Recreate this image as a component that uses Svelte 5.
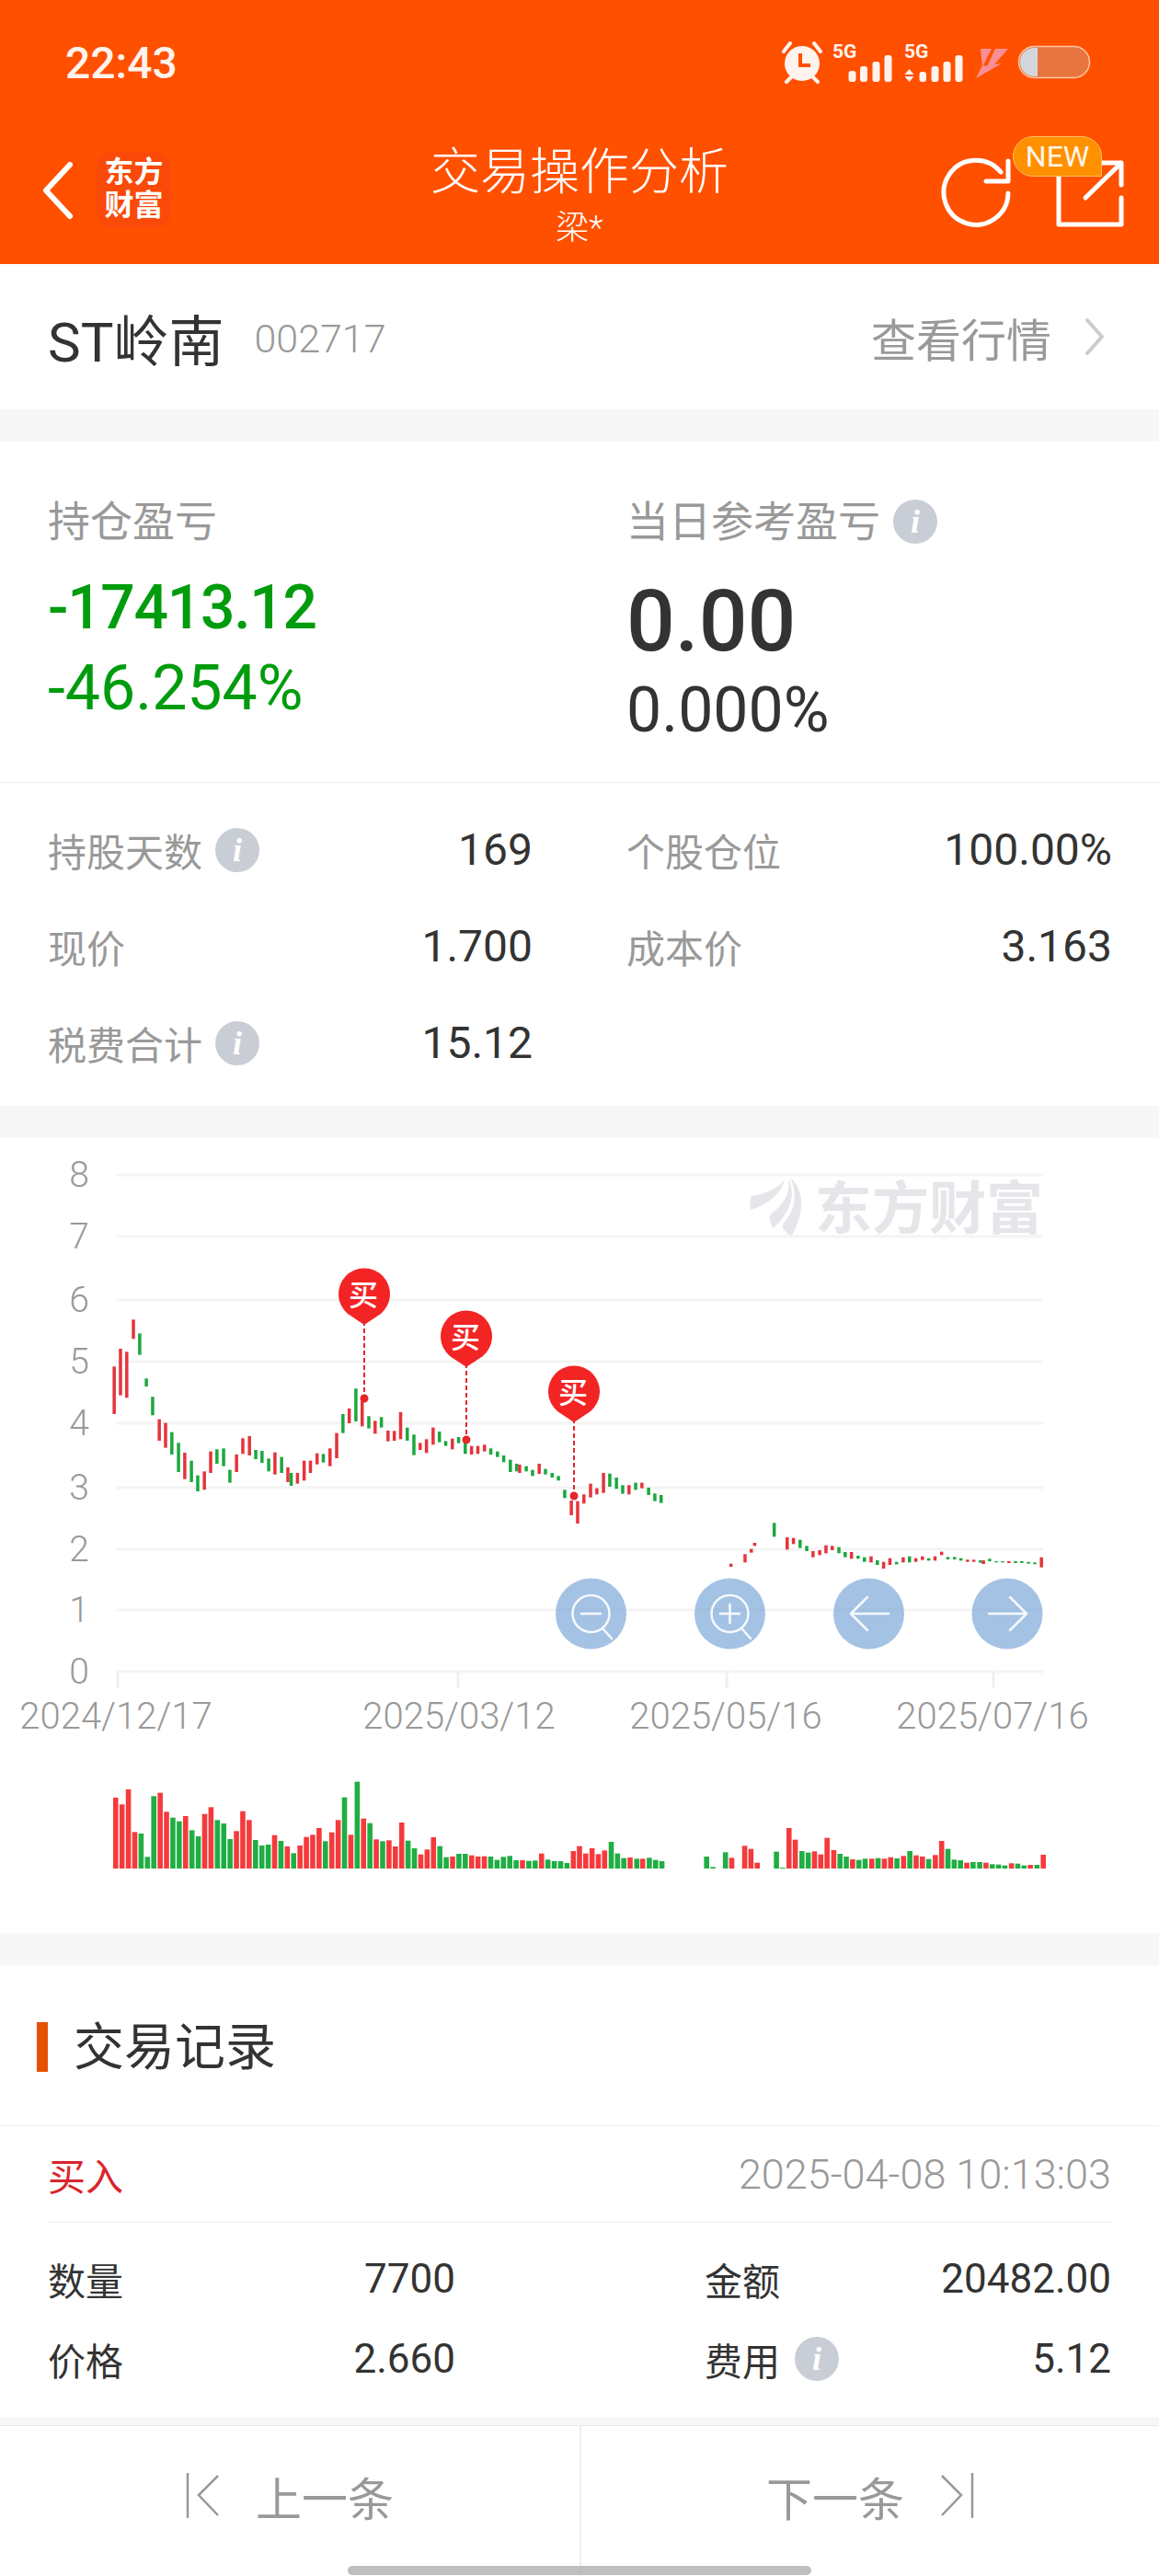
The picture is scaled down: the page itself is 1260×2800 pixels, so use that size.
<script>
  // chart samples: x and y are in crop units, sx/sy bring them to page pixels
  const sx = (x) => x / 2.489;
  const sy = (y) => 1220 + y / 3;

  const candles = [
    [309,793,948,'r'],[326,735,887,'r'],[343,745,895,'r'],[361,640,703,'r'],[378,685,755,'g'],[396,832,858,'g'],
    [413,892,952,'g'],[431,965,1035,'r'],[448,977,1058,'r'],[465,1007,1080,'g'],[483,1042,1137,'g'],[500,1074,1160,'r'],
    [518,1100,1170,'g'],[535,1148,1200,'g'],[553,1135,1195,'r'],[570,1070,1140,'r'],[587,1063,1110,'g'],[605,1060,1118,'g'],
    [622,1130,1172,'g'],[640,1080,1137,'r'],[657,1027,1078,'r'],[675,1020,1083,'r'],[692,1065,1095,'g'],[709,1068,1107,'g'],
    [727,1093,1135,'g'],[744,1073,1145,'r'],[762,1088,1140,'g'],[779,1122,1170,'r'],[788,1140,1182,'g'],[805,1140,1175,'r'],
    [823,1100,1165,'r'],[840,1100,1140,'r'],[858,1076,1112,'r'],[875,1078,1106,'g'],[893,1060,1118,'r'],[911,1010,1092,'r'],
    [928,948,1010,'g'],[945,930,978,'r'],[963,865,972,'g'],[980,905,988,'r'],[998,955,995,'g'],[1015,970,1012,'r'],
    [1032,958,992,'g'],[1050,1002,1037,'r'],[1067,1003,1035,'r'],[1084,942,1030,'r'],[1102,992,1035,'g'],[1120,1015,1082,'g'],
    [1137,1042,1065,'r'],[1154,1030,1075,'r'],[1172,992,1048,'r'],[1189,1005,1040,'g'],[1206,1036,1052,'g'],[1224,1028,1063,'r'],
    [1241,1023,1043,'g'],[1259,1040,1078,'g'],[1276,1052,1080,'r'],[1293,1052,1078,'r'],[1311,1048,1070,'r'],[1328,1060,1080,'g'],
    [1346,1070,1088,'g'],[1363,1083,1105,'g'],[1381,1097,1137,'g'],[1398,1110,1135,'g'],[1406,1113,1140,'r'],[1424,1118,1135,'g'],
    [1441,1130,1150,'g'],[1459,1110,1143,'r'],[1476,1127,1145,'g'],[1494,1140,1155,'g'],[1511,1150,1165,'g'],[1528,1195,1222,'g'],
    [1546,1230,1278,'r'],[1563,1232,1305,'r'],
    [1580,1210,1240,'r'],[1598,1175,1220,'r'],[1615,1190,1210,'r'],[1633,1140,1205,'r'],[1650,1142,1185,'g'],[1668,1155,1192,'g'],
    [1685,1180,1208,'g'],[1702,1180,1210,'r'],[1720,1172,1195,'g'],[1737,1172,1190,'r'],[1755,1188,1212,'g'],[1772,1207,1232,'g'],
    [1789,1212,1238,'g'],
    [1978,1436,1446,'r'],[2016,1405,1432,'r'],[2033,1388,1400,'r'],[2042,1368,1378,'r'],[2095,1303,1348,'g'],[2130,1350,1390,'r'],
    [2147,1352,1372,'r'],[2165,1358,1385,'g'],[2183,1378,1395,'g'],[2200,1395,1415,'r'],[2218,1392,1408,'r'],[2235,1376,1402,'r'],
    [2252,1378,1392,'r'],[2270,1382,1402,'g'],[2287,1398,1415,'g'],[2304,1398,1420,'r'],[2322,1410,1420,'g'],[2339,1415,1430,'g'],
    [2357,1412,1432,'r'],[2374,1425,1440,'g'],[2391,1430,1452,'r'],[2408,1418,1440,'r'],[2426,1430,1438,'g'],[2444,1415,1432,'r'],
    [2461,1412,1432,'g'],[2478,1418,1430,'r'],[2496,1412,1424,'r'],[2513,1418,1426,'g'],[2530,1412,1426,'r'],[2548,1397,1408,'r'],
    [2565,1414,1422,'g'],[2583,1414,1422,'g'],[2600,1418,1426,'g'],[2618,1423,1430,'r'],[2635,1423,1430,'r'],[2653,1425,1433,'g'],
    [2661,1425,1437,'r'],[2678,1420,1428,'g'],[2696,1428,1432,'g'],[2713,1428,1432,'g'],[2730,1428,1434,'r'],[2748,1428,1434,'g'],
    [2765,1428,1434,'g'],[2783,1430,1436,'g'],[2800,1432,1438,'g'],[2818,1415,1448,'r']
  ];

  const volTops = [
    759,781,732,871,876,952,754,743,805,824,836,819,865,885,812,790,832,843,894,868,803,832,897,915,912,881,900,918,940,915,
    887,880,858,901,872,832,758,880,707,827,842,895,901,898,918,840,899,924,944,928,888,917,953,951,942,942,947,951,950,951,
    962,952,949,963,963,965,964,941,961,966,966,972,933
  ];
  const volColors = 'rrrrgggrrggrggrrgggrrrgggrgrgrrrrgrrgrgrgrgrrrggrrrggrggrrrgggggrggrggggr';
  const volumes = [
    ...volTops.map((top, i) => [313 + 17.2 * i, top, volColors[i]]),
    [1568,917,'r'],[1585,941,'r'],[1602,924,'r'],[1619,943,'r'],[1636,931,'r'],[1654,903,'g'],[1671,941,'g'],[1688,956,'g'],
    [1705,954,'r'],[1723,958,'g'],[1739,958,'r'],[1757,955,'g'],[1774,962,'g'],[1791,966,'g'],
    [1912,951,'g'],[1929,985,'g'],[1963,937,'g'],[1980,955,'r'],[2015,916,'r'],[2032,926,'r'],[2049,971,'r'],
    [2101,935,'g'],[2118,987,'g'],[2135,858,'r'],[2152,896,'r'],[2170,933,'g'],[2187,938,'g'],[2204,934,'r'],[2221,944,'r'],
    [2238,890,'r'],[2256,930,'r'],[2273,942,'g'],[2290,951,'g'],[2307,960,'r'],[2324,962,'g'],[2341,958,'g'],[2359,958,'r'],
    [2376,956,'g'],[2393,958,'r'],[2410,953,'r'],[2427,957,'g'],[2445,949,'r'],[2462,933,'g'],[2479,947,'r'],[2496,951,'r'],
    [2513,959,'g'],[2531,946,'r'],[2548,900,'r'],[2565,926,'g'],[2582,961,'g'],[2599,963,'g'],[2616,971,'r'],[2633,969,'g'],
    [2651,969,'g'],[2668,971,'r'],[2685,976,'g'],[2702,977,'g'],[2719,980,'g'],[2737,973,'r'],[2754,974,'g'],[2771,980,'g'],
    [2788,978,'r'],[2806,978,'g'],[2823,945,'r']
  ];

  const gridYs = [1276, 1343, 1412, 1479, 1546, 1616, 1683, 1749, 1816];
  const ticks = [
    { x: 128, label: 126, text: '2024/12/17' },
    { x: 498, label: 499, text: '2025/03/12' },
    { x: 790, label: 789, text: '2025/05/16' },
    { x: 1080, label: 1079, text: '2025/07/16' }
  ];
  const pins = [
    { x: 395, y: 1407, dot: 1519 },
    { x: 506, y: 1453, dot: 1564 },
    { x: 623, y: 1513, dot: 1625 }
  ];
</script>

<div class="page">
  <header class="top">
    <div class="status">
      <span class="time">22:43</span>
      <svg class="status-icons" viewBox="850 40 340 55" width="340" height="55">
        <g fill="#fff3ee">
          <circle cx="872" cy="69" r="19" />
          <path d="M852 56l7-9 M892 56l-7-9 M860 84l-5 5 M884 84l5 5" stroke="#fff3ee" stroke-width="4" stroke-linecap="round" fill="none" />
          <path d="M870 58v13h11" stroke="#ff5000" stroke-width="4" fill="none" />
          <text x="905" y="63" class="fiveg">5G</text>
          <text x="983" y="63" class="fiveg">5G</text>
          <rect x="922.5" y="77" width="8" height="12" rx="3" />
          <rect x="935" y="72" width="8" height="17" rx="3" />
          <rect x="948.5" y="67" width="8" height="22" rx="3" />
          <rect x="961.5" y="60" width="8" height="29" rx="3" />
          <path d="M988.5 75l5 6h-10z M988.5 89l5-6h-10z" />
          <rect x="999.5" y="78" width="7.5" height="11" rx="3" />
          <rect x="1012.5" y="72" width="8" height="17" rx="3" />
          <rect x="1025.5" y="67" width="8" height="22" rx="3" />
          <rect x="1038.5" y="60" width="8" height="29" rx="3" />
        </g>
        <path d="M1066 53h12l-10 20z M1082 53h14l-15 17 8-1-28 16 7-14 5 1z" fill="#f98f95" />
        <rect x="1107.5" y="50.5" width="77" height="34" rx="17" fill="#e8743f" stroke="#fbc6a4" stroke-width="1.5" />
        <path d="M1128 52h-3.500a15.500 15.500 0 0 0 0 31h3.500z" fill="#d3d7dc" />
      </svg>
    </div>
    <div class="nav">
      <div class="nav-left">
        <svg width="40" height="64" viewBox="0 0 40 64">
          <path d="M33 5L7 33l26 28" fill="none" stroke="#fff" stroke-width="6" stroke-linecap="round" stroke-linejoin="round" />
        </svg>
        <div class="logo">东方<br />财富</div>
      </div>
      <div class="title">
        <div class="title-main">交易操作分析</div>
        <div class="title-sub">梁*</div>
      </div>
      <div class="nav-right">
        <svg width="210" height="90" viewBox="1020 165 210 90">
          <g fill="none" stroke="#fff" stroke-width="5" stroke-linecap="round" stroke-linejoin="round">
            <path d="M1096 210a35 35 0 1 1-8-23" />
            <path d="M1072 197h24v-22" />
            <path d="M1151 190v54h68v-29" />
            <path d="M1180 215l39-38 M1195 177h24v24" />
          </g>
        </svg>
        <span class="new">NEW</span>
      </div>
    </div>
  </header>

  <section class="stock">
    <div class="stock-name">
      <span class="name">ST岭南</span>
      <span class="code">002717</span>
    </div>
    <div class="quote-link">
      <span>查看行情</span>
      <svg width="22" height="42" viewBox="0 0 22 42">
        <path d="M3 3l16 18L3 39" fill="none" stroke="#ccc" stroke-width="4" stroke-linecap="round" stroke-linejoin="round" />
      </svg>
    </div>
  </section>

  <section class="card summary">
    <div class="summary-top">
      <div class="stat">
        <div class="label">持仓盈亏</div>
        <div class="big green">-17413.12</div>
        <div class="pct green">-46.254%</div>
      </div>
      <div class="stat">
        <div class="label">当日参考盈亏 <span class="info">i</span></div>
        <div class="big huge">0.00</div>
        <div class="pct dark">0.000%</div>
      </div>
    </div>
    <div class="summary-rows">
      <div class="row"><span class="row-label">持股天数 <span class="info">i</span></span><span class="row-value">169</span></div>
      <div class="row"><span class="row-label">个股仓位</span><span class="row-value">100.00%</span></div>
      <div class="row"><span class="row-label">现价</span><span class="row-value">1.700</span></div>
      <div class="row"><span class="row-label">成本价</span><span class="row-value">3.163</span></div>
      <div class="row"><span class="row-label">税费合计 <span class="info">i</span></span><span class="row-value">15.12</span></div>
    </div>
  </section>

  <section class="card chart">
    <svg viewBox="0 1236 1260 864" width="1260" height="864">
      <g fill="#e6e6ea">
        <path d="M853 1282c-10 10-22 15-36 17-2 5-2 10-1 15 16-5 32-15 37-32z" />
        <path d="M857 1280c3 16-6 29-18 38-3 3-3 5-2 8l3 8c16-13 27-34 17-54z" />
        <path d="M859 1279c14 12 18 34 1 65l-8-9c-2-3-1-5 1-8 12-14 14-32 6-48z" />
        <text x="886" y="1335" class="watermark">东方财富</text>
      </g>

      {#each gridYs as y, i}
        <rect x="126" y={y - 1.5} width="1008" height="3" fill="#f4f4f4" />
        <text x="97" y={y + 13} class="axis" text-anchor="end">{8 - i}</text>
      {/each}

      {#each ticks as t}
        <rect x={t.x - 1.500} y="1816" width="3" height="18" fill="#f0f0f0" />
        <text x={t.label} y="1878" class="axis date" text-anchor="middle">{t.text}</text>
      {/each}

      {#each candles as [x, top, bottom, c]}
        <rect x={sx(x) - 1.75} y={sy(top)} width="3.5" height={(bottom - top) / 3} fill={c === 'r' ? '#e5343c' : '#1ba83e'} />
      {/each}

      {#each pins as p}
        <path d="M{p.x + 1} {p.y + 20}V{p.dot}" stroke="#e5262b" stroke-width="2" stroke-dasharray="5 3" />
        <circle cx={p.x + 1} cy={p.dot} r="4.5" fill="#e5262b" />
        <path d="M{p.x + 1} {p.y + 32}L{p.x - 17} {p.y + 20}A28 28 0 1 1 {p.x + 19} {p.y + 20}z" fill="#f32424" />
        <text x={p.x} y={p.y + 11} class="pin-text" text-anchor="middle">买</text>
      {/each}

      {#each [642.5, 793.5, 944.5, 1095] as cx}
        <circle {cx} cy="1753" r="38.5" fill="rgb(103 153 210 / 0.6)" />
      {/each}
      <g fill="none" stroke="#fff" stroke-width="2.500" stroke-opacity="0.9" stroke-linecap="round" stroke-linejoin="round">
        <circle cx="642.5" cy="1753" r="20" />
        <path d="M632 1753h21 M656 1770l9 10" />
        <circle cx="793.5" cy="1753" r="20" />
        <path d="M783 1753h21 M793.500 1743v20 M807 1770l9 10" />
        <path d="M925 1753h41 M943 1735l-18 18 18 18" />
        <path d="M1075 1753h41 M1098 1735l18 18-18 18" />
      </g>

      {#each volumes as [x, top, c]}
        <rect x={sx(x) - 2.8} y={1700 + top / 3} width="5.6" height={(990 - top) / 3} fill={c === 'r' ? '#f53a3c' : '#1fae44'} />
      {/each}
    </svg>
  </section>

  <section class="card records">
    <h2 class="records-title">交易记录</h2>
    <div class="record-head">
      <span class="buy">买入</span>
      <span class="record-date">2025-04-08 10:13:03</span>
    </div>
    <div class="record-rows">
      <div class="record-row"><span>数量</span><b>7700</b></div>
      <div class="record-row"><span>金额</span><b>20482.00</b></div>
      <div class="record-row"><span>价格</span><b>2.660</b></div>
      <div class="record-row"><span>费用 <span class="info">i</span></span><b>5.12</b></div>
    </div>
  </section>

  <footer class="pager">
    <div class="pager-item">
      <svg width="38" height="52" viewBox="0 0 38 52">
        <path d="M2 1v49 M35 4L14 25l21 22" fill="none" stroke="#999" stroke-width="2.5" />
      </svg>
      <span>上一条</span>
    </div>
    <div class="pager-item">
      <span>下一条</span>
      <svg width="38" height="52" viewBox="0 0 38 52">
        <path d="M36 1v49 M3 4l21 21L3 47" fill="none" stroke="#999" stroke-width="2.5" />
      </svg>
    </div>
    <div class="home-bar"></div>
  </footer>
</div>

<style>
  :global(body) {
    margin: 0;
    background: #f7f7f7;
  }

  .page {
    width: 1260px;
    height: 2800px;
    overflow: hidden;
    font-family: Roboto, "Noto Sans CJK SC", sans-serif;
    color: #333;
  }

  .top {
    background: #ff5000;
    height: 287px;
    color: #fff;
  }

  .status {
    height: 138px;
    box-sizing: border-box;
    padding: 40px 70px 0 71px;
    display: flex;
    justify-content: space-between;
    align-items: flex-start;
  }

  .time {
    font-size: 48px;
    font-weight: 500;
    line-height: 58px;
    color: #fff3ee;
  }

  .status-icons {
    display: block;
  }

  .fiveg {
    font-size: 21px;
    font-weight: 700;
  }

  .nav {
    height: 149px;
    display: grid;
    grid-template-columns: 1fr auto 1fr;
  }

  .nav-left {
    display: flex;
    align-items: center;
    gap: 22px;
    padding: 0 0 14px 43px;
  }

  .logo {
    width: 81px;
    height: 82px;
    box-sizing: border-box;
    background: #fa4a0a;
    border-radius: 16px;
    text-align: center;
    font-size: 32px;
    font-weight: 700;
    line-height: 36px;
    padding-top: 4px;
  }

  .title {
    text-align: center;
    font-weight: 300;
  }

  .title-main {
    font-size: 54px;
    line-height: 62px;
    margin-top: 19px;
  }

  .title-sub {
    font-size: 36px;
    line-height: 42px;
    margin-top: 8px;
  }

  .nav-right {
    position: relative;
    display: flex;
    justify-content: flex-end;
    align-items: flex-start;
    padding: 27px 30px 0 0;
  }

  .new {
    position: absolute;
    right: 62px;
    top: 10px;
    width: 97px;
    height: 44px;
    box-sizing: border-box;
    background: #ff9100;
    border: 1px solid #ffc15e;
    border-radius: 22px 22px 0 22px;
    font-size: 32px;
    line-height: 42px;
    text-align: center;
    color: #fff6e8;
  }

  .stock {
    height: 158px;
    background: #fff;
    display: flex;
    justify-content: space-between;
    align-items: center;
    padding: 0 52px;
  }

  .stock-name {
    display: flex;
    align-items: center;
    gap: 33px;
  }

  .name {
    font-size: 60px;
    color: #333;
  }

  .code {
    font-size: 43px;
    color: #999;
    font-weight: 300;
    padding-top: 4px;
  }

  .quote-link {
    display: flex;
    align-items: center;
    gap: 36px;
    font-size: 49px;
    color: #999;
    padding-right: 7px;
  }

  .quote-link svg {
    display: block;
  }

  .card {
    background: #fff;
  }

  .summary {
    margin-top: 35px;
    height: 722px;
  }

  .summary-top,
  .summary-rows {
    display: grid;
    grid-template-columns: 527px 528px;
    column-gap: 102px;
    padding: 0 52px;
  }

  .summary-top {
    height: 371px;
    box-sizing: border-box;
    padding-top: 61px;
    border-bottom: 1px solid #eee;
  }

  .label {
    display: flex;
    align-items: center;
    gap: 14px;
    font-size: 46px;
    line-height: 52px;
    color: #999;
  }

  .big {
    font-size: 66px;
    line-height: 80px;
    margin-top: 28px;
    font-weight: 500;
    letter-spacing: -1.3px;
  }

  .huge {
    font-size: 93px;
    line-height: 100px;
    color: #333;
    margin-top: 33px;
    letter-spacing: 0;
  }

  .pct {
    font-size: 68px;
    line-height: 80px;
    margin-top: 7px;
  }

  .green {
    color: #009c0d;
  }

  .dark {
    color: #333;
    margin-top: 6px;
  }

  .summary-rows {
    padding-top: 20px;
  }

  .row {
    height: 105px;
    display: flex;
    justify-content: space-between;
    align-items: center;
  }

  .row-label {
    display: flex;
    align-items: center;
    gap: 14px;
    font-size: 42px;
    color: #999;
  }

  .row-value {
    font-size: 48px;
    color: #333;
  }

  .info {
    width: 48px;
    height: 48px;
    border-radius: 50%;
    background: #c9ced6;
    color: #fff;
    display: inline-flex;
    align-items: center;
    justify-content: center;
    font-family: "Liberation Serif", serif;
    font-style: italic;
    font-weight: 700;
    font-size: 36px;
    line-height: 1;
  }

  .chart {
    margin-top: 35px;
    height: 864px;
  }

  .chart svg {
    display: block;
  }

  .axis {
    font-size: 39px;
    fill: #999;
    font-weight: 300;
  }

  .date {
    font-size: 40px;
  }

  .watermark {
    font-size: 62px;
    font-weight: 700;
  }

  .pin-text {
    font-size: 32px;
    font-weight: 500;
    fill: #fff;
  }

  .records {
    margin-top: 35px;
    height: 491px;
    padding: 0 52px;
  }

  .records-title {
    position: relative;
    margin: 0 -52px;
    height: 175px;
    box-sizing: border-box;
    padding: 56px 0 0 80px;
    font-size: 55px;
    font-weight: 400;
    line-height: 66px;
    color: #333;
    border-bottom: 1px solid #eee;
  }

  .records-title::before {
    content: '';
    position: absolute;
    left: 40px;
    top: 62px;
    width: 12px;
    height: 54px;
    background: #e65000;
  }

  .record-head {
    height: 104px;
    display: flex;
    justify-content: space-between;
    align-items: center;
    border-bottom: 1px solid #eee;
  }

  .buy {
    font-size: 41px;
    color: #d9252b;
  }

  .record-date {
    font-size: 45px;
    color: #999;
    font-weight: 300;
  }

  .record-rows {
    display: grid;
    grid-template-columns: 443px 442px;
    column-gap: 271px;
    padding-top: 17px;
  }

  .record-row {
    height: 87px;
    display: flex;
    justify-content: space-between;
    align-items: center;
    font-size: 41px;
  }

  .record-row > span {
    display: flex;
    align-items: center;
    gap: 16px;
  }

  .record-row b {
    font-size: 44px;
    font-weight: 400;
  }

  .pager {
    position: relative;
    margin-top: 9px;
    height: 165px;
    box-sizing: border-box;
    background: #fff;
    border-top: 1px solid #e8e8e8;
    display: grid;
    grid-template-columns: 630px 630px;
  }

  .pager-item {
    display: flex;
    align-items: center;
    gap: 38px;
    justify-content: center;
    font-size: 50px;
    color: #999;
    padding-bottom: 12px;
  }

  .pager-item + .pager-item {
    border-left: 2px solid #eee;
  }

  .pager-item svg {
    display: block;
  }

  .home-bar {
    position: absolute;
    left: 378px;
    top: 152px;
    width: 504px;
    height: 10px;
    border-radius: 5px;
    background: #bfbfbf;
  }
</style>
